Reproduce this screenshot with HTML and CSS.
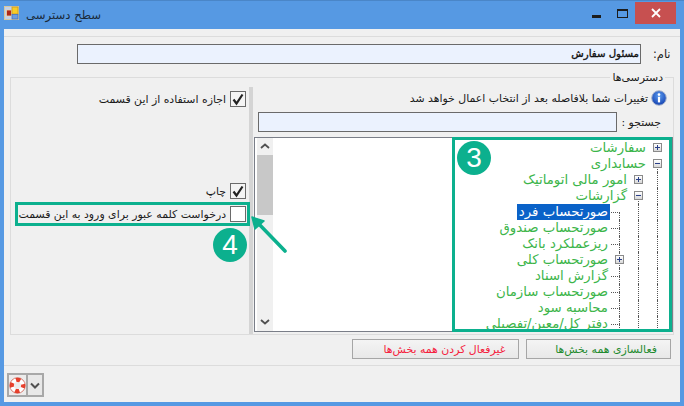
FILE: index.html
```html
<!DOCTYPE html>
<html lang="fa">
<head>
<meta charset="utf-8">
<title>سطح دسترسی</title>
<link rel="stylesheet" href="styles.css">
</head>
<body>
<div class="window">
  <header class="titlebar">
    <svg class="app-icon" viewBox="0 0 15 14" width="15" height="14">
      <rect x="0.5" y="0.5" width="14" height="13" fill="#c4d2ea" stroke="#d8c8a0"/>
      <rect x="2.5" y="4" width="5" height="6" fill="#b02818" stroke="#e8d8b0" stroke-width="0.8"/>
      <rect x="8" y="1" width="6" height="7" fill="#f8cc28" stroke="#c89820" stroke-width="0.8"/>
      <rect x="8" y="8.5" width="6" height="4.5" fill="#6c9ce0" stroke="#4a74b8" stroke-width="0.8"/>
    </svg>
    <span class="title-text">سطح دسترسی</span>
    <span class="win-controls">
      <span class="win-btn"><span class="min-glyph"></span></span>
      <span class="win-btn"><span class="max-glyph"></span></span>
      <span class="win-close">
        <svg viewBox="0 0 10 10" width="10" height="10"><path d="M1 1L9 9M9 1L1 9" stroke="#fff" stroke-width="1.8"/></svg>
      </span>
    </span>
  </header>

  <main class="client">
    <div class="top-sep"></div>
    <div class="name-row">
      <label class="name-label">نام:</label>
      <div class="field name-field">مسئول سفارش</div>
    </div>

    <section class="group">
      <div class="legend">دسترسی‌ها</div>

      <div class="left-panel">
        <div class="check-row first"><span class="check on"><svg viewBox="0 0 14 14" width="14" height="14"><path d="M2.5 7.5L5.5 11.5L11.5 2.5" fill="none" stroke="#222" stroke-width="2.2"/></svg></span><span>اجازه استفاده از این قسمت</span></div>
        <div class="check-row second"><span class="check on"><svg viewBox="0 0 14 14" width="14" height="14"><path d="M2.5 7.5L5.5 11.5L11.5 2.5" fill="none" stroke="#222" stroke-width="2.2"/></svg></span><span>چاپ</span></div>
        <div class="check-row third"><span class="check"></span><span>درخواست کلمه عبور برای ورود به این قسمت</span></div>
        <div class="highlight-row"></div>
        <div class="badge badge-four">4</div>
      </div>

      <div class="splitter"></div>

      <div class="right-panel">
        <div class="info-row">
          <svg class="info-icon" viewBox="0 0 16 16" width="16" height="16">
            <defs><radialGradient id="ig" cx="50%" cy="35%" r="65%"><stop offset="0" stop-color="#5c9cf0"/><stop offset="1" stop-color="#1240b0"/></radialGradient></defs>
            <circle cx="8" cy="8" r="7.3" fill="url(#ig)" stroke="#a8b4cc"/>
            <circle cx="8" cy="4.6" r="1.3" fill="#fff"/>
            <rect x="6.9" y="6.8" width="2.2" height="5.6" fill="#fff"/>
          </svg>
          <span>تغییرات شما بلافاصله بعد از انتخاب اعمال خواهد شد</span>
        </div>
        <div class="search-row">
          <label class="search-label">جستجو :</label>
          <div class="field search-field"></div>
        </div>
        <div class="tree">
          <div class="scrollbar">
            <svg class="sb-arrow" viewBox="0 0 10 6" width="10" height="6"><path d="M1 5L5 1.5L9 5" fill="none" stroke="#505050" stroke-width="1.8"/></svg>
            <div class="sb-thumb"></div>
            <div class="sb-rest"></div>
            <svg class="sb-arrow" viewBox="0 0 10 6" width="10" height="6"><path d="M1 1L5 4.5L9 1" fill="none" stroke="#505050" stroke-width="1.8"/></svg>
          </div>
          <div class="nodes">
            <div class="node"><span class="cell"><span class="exp plus"></span></span><span class="label">سفارشات</span></div>
            <div class="node"><span class="cell line-down"><span class="exp minus"></span></span><span class="label">حسابداری</span></div>
            <div class="node"><span class="cell line"></span><span class="cell"><span class="exp plus"></span></span><span class="label">امور مالی اتوماتیک</span></div>
            <div class="node"><span class="cell line"></span><span class="cell line-down"><span class="exp minus"></span></span><span class="label">گزارشات</span></div>
            <div class="node"><span class="cell line"></span><span class="cell line"></span><span class="cell stub line-down"></span><span class="label selected">صورتحساب فرد</span></div>
            <div class="node"><span class="cell line"></span><span class="cell line"></span><span class="cell stub line"></span><span class="label">صورتحساب صندوق</span></div>
            <div class="node"><span class="cell line"></span><span class="cell line"></span><span class="cell stub line"></span><span class="label">ریزعملکرد بانک</span></div>
            <div class="node"><span class="cell line"></span><span class="cell line"></span><span class="cell line"><span class="exp plus"></span></span><span class="label">صورتحساب کلی</span></div>
            <div class="node"><span class="cell line"></span><span class="cell line"></span><span class="cell stub line"></span><span class="label">گزارش اسناد</span></div>
            <div class="node"><span class="cell line"></span><span class="cell line"></span><span class="cell stub line"></span><span class="label">صورتحساب سازمان</span></div>
            <div class="node"><span class="cell line"></span><span class="cell line"></span><span class="cell stub line"></span><span class="label">محاسبه سود</span></div>
            <div class="node"><span class="cell line"></span><span class="cell line"></span><span class="cell stub line"></span><span class="label">دفتر کل/معین/تفصیلی</span></div>
          </div>
          <div class="highlight-tree"></div>
          <div class="badge badge-three">3</div>
        </div>
      </div>
    </section>

    <div class="actions">
      <button class="btn btn-off">غیرفعال کردن همه بخش‌ها</button>
      <button class="btn btn-on">فعالسازی همه بخش‌ها</button>
    </div>
    <div class="bottom-sep"></div>

    <div class="footer">
      <span class="split-main">
        <svg viewBox="0 0 18 18" width="17" height="17">
          <circle cx="9" cy="9" r="6" fill="none" stroke="#fff" stroke-width="4.4"/>
          <circle cx="9" cy="9" r="6" fill="none" stroke="#e8402c" stroke-width="4.4" stroke-dasharray="4.7 4.7" stroke-dashoffset="2.3"/>
          <circle cx="9" cy="9" r="8.2" fill="none" stroke="#c84030" stroke-width="0.7"/>
        </svg>
      </span>
      <span class="split-arrow">
        <svg viewBox="0 0 10 7" width="10" height="7"><path d="M1 1.5L5 5.5L9 1.5" fill="none" stroke="#505050" stroke-width="2"/></svg>
      </span>
    </div>
  </main>

  <svg class="pointer" viewBox="0 0 40 40" width="40" height="40">
    <path d="M36 37L6 6" stroke="#0cb08e" stroke-width="3.6" stroke-linecap="round"/>
    <path d="M3 3L15 7L6 15Z" fill="#0cb08e" stroke="#0cb08e" stroke-width="1.5" stroke-linejoin="round"/>
  </svg>
</div>
</body>
</html>
```

FILE: styles.css
```css
* { box-sizing: border-box; }
html, body { margin: 0; padding: 0; }
body { width: 684px; height: 406px; overflow: hidden; font-family: "DejaVu Sans", sans-serif; font-size: 10.9px; color: #1a1a1a; }

.window { position: relative; width: 684px; height: 406px; background: #5699e3; border-top: 1px solid #4a86c8; padding: 0 4px 4px; display: flex; flex-direction: column; }

.titlebar { height: 28px; flex: none; display: flex; align-items: flex-start; }
.app-icon { margin: 5px 0 0 0; flex: none; }
.title-text { direction: rtl; margin: 7px 0 0 7px; font-size: 11.7px; color: #1a2a3a; }
.win-controls { margin-left: auto; display: flex; margin-right: 4px; }
.win-btn { width: 26px; height: 22px; display: flex; align-items: center; justify-content: center; margin-top: 1px; }
.min-glyph { width: 9px; height: 3px; background: #1c1c1c; margin-top: 6px; }
.max-glyph { width: 11px; height: 9px; border: 1px solid #1c1c1c; border-top-width: 2px; }
.win-close { width: 41px; height: 22px; margin: 1px 0 0 0; background: #c75050; display: flex; align-items: center; justify-content: center; }

.client { flex: 1; min-height: 0; background: #f0f0f0; display: flex; flex-direction: column; }
.top-sep { margin-top: 7px; height: 1px; background: #dcdcdc; flex: none; }

.name-row { display: flex; flex: none; margin: 7px 0 0 73px; height: 20px; align-items: center; }
.field { background: #ebf2fe; border: 1px solid #6a6a6a; }
.name-field { width: 564px; height: 20px; direction: rtl; font-size: 10.2px; -webkit-text-stroke: 0.35px #111; color: #111; line-height: 17px; padding-right: 1px; order: 1; }
.name-label { order: 2; direction: rtl; margin-left: 12px; font-size: 11.4px; }

.group { position: relative; flex: none; height: 258px; margin: 13px 6px 0; border: 1px solid #dcdcdc; padding-top: 9px; display: flex; }
.legend { position: absolute; top: -8px; right: 8px; padding: 0 2px; background: #f0f0f0; direction: rtl; line-height: 16px; }

.left-panel { position: relative; width: 238px; flex: none; direction: rtl; padding-right: 3px; }
.check-row { display: flex; align-items: center; gap: 4px; height: 16px; white-space: nowrap; }
.check-row.first { margin-top: 4px; }
.check-row.second { margin-top: 76px; }
.check-row.third { margin-top: 7px; }
.check { width: 16px; height: 16px; flex: none; background: #fff; border: 1px solid #6a6a6a; display: flex; align-items: center; justify-content: center; }
.check.on { background: #f4f4f4; }
.highlight-row { position: absolute; left: 4px; top: 115px; width: 235px; height: 24px; border: 3px solid #0cb08e; }

.badge { position: absolute; width: 34px; height: 34px; border-radius: 50%; background: #0cb08e; color: #fff; font-family: "Liberation Sans", sans-serif; font-size: 28px; line-height: 34px; text-align: center; direction: ltr; }
.badge-four { left: 202px; top: 141px; }
.badge-three { left: 202px; top: 3px; }

.splitter { width: 4px; flex: none; background: #d4d4d4; }

.right-panel { flex: 1; min-width: 0; display: flex; flex-direction: column; direction: rtl; }
.info-row { flex: none; display: flex; align-items: center; gap: 3px; height: 16px; margin-top: 3px; padding-right: 6px; white-space: nowrap; }
.info-icon { flex: none; }
.search-row { flex: none; display: flex; height: 20px; margin-top: 6px; align-items: center; padding-right: 12px; }
.search-label { width: 41px; flex: none; margin-left: 3px; }
.search-field { width: 359px; height: 20px; }

.tree { position: relative; flex: 1; min-height: 0; margin: 5px 0 2px 0; width: 419px; background: #fff; border: 1px solid #7a7e88; display: flex; direction: ltr; }
.scrollbar { width: 16px; flex: none; margin-left: 2px; background: #f0f0f0; display: flex; flex-direction: column; align-items: center; }
.sb-arrow { flex: none; margin: 5px 0 6px; }
.sb-thumb { width: 100%; height: 60px; background: #c8c8c8; flex: none; }
.sb-rest { flex: 1; }
.nodes { flex: 1; min-width: 0; direction: rtl; padding: 2px 5px 0 0; overflow: hidden; }
.node { display: flex; height: 16px; align-items: stretch; color: #3cb54a; font-size: 13.3px; white-space: nowrap; }
.cell { position: relative; width: 19px; flex: none; }
.cell.line::before { content: ""; position: absolute; top: 0; bottom: 0; right: 9px; border-right: 1px dotted #555; }
.cell.line-down::before { content: ""; position: absolute; top: 8px; bottom: 0; right: 9px; border-right: 1px dotted #555; }
.cell.stub::after { content: ""; position: absolute; top: 8px; left: 1px; right: 9px; border-top: 1px dotted #555; }
.exp { position: absolute; top: 3px; right: 5px; width: 9px; height: 9px; border: 1px solid #8a8a8a; background: linear-gradient(#fff, #d8d8d8); z-index: 1; }
.exp::after { content: ""; position: absolute; left: 1px; right: 1px; top: 3px; height: 1px; background: #2a3f88; }
.exp.plus::before { content: ""; position: absolute; top: 1px; bottom: 1px; left: 3px; width: 1px; background: #2a3f88; }
.label { line-height: 16px; padding: 0 2px; }
.label.selected { background: #0a62c8; color: #fff; }
.highlight-tree { position: absolute; top: -1px; right: 0; bottom: -1px; width: 220px; border: 3px solid #0cb08e; pointer-events: none; }

.actions { flex: none; display: flex; margin: 4px 0 0 348px; gap: 7px; height: 20px; }
.btn { height: 20px; padding: 0; border: 1px solid #a6a6a6; background: linear-gradient(#f4f4f4, #e8e8e8); font-family: "DejaVu Sans", sans-serif; font-size: 10.9px; direction: rtl; }
.btn-off { width: 167px; color: #f5203c; padding-left: 18px; }
.btn-on { width: 145px; color: #1e8a2e; padding-left: 15px; }
.bottom-sep { flex: none; margin-top: 6px; height: 1px; background: #dcdcdc; }

.footer { flex: none; display: flex; margin: 7px 0 0 3px; height: 24px; }
.split-main { width: 21px; height: 24px; border: 2px solid #a8a8a8; display: flex; align-items: center; justify-content: center; background: #ececec; }
.split-arrow { width: 16px; height: 24px; border: 2px solid #a8a8a8; border-left: 0; display: flex; align-items: center; justify-content: center; background: #e8e8e8; }

.pointer { position: absolute; left: 249px; top: 213px; }
```
